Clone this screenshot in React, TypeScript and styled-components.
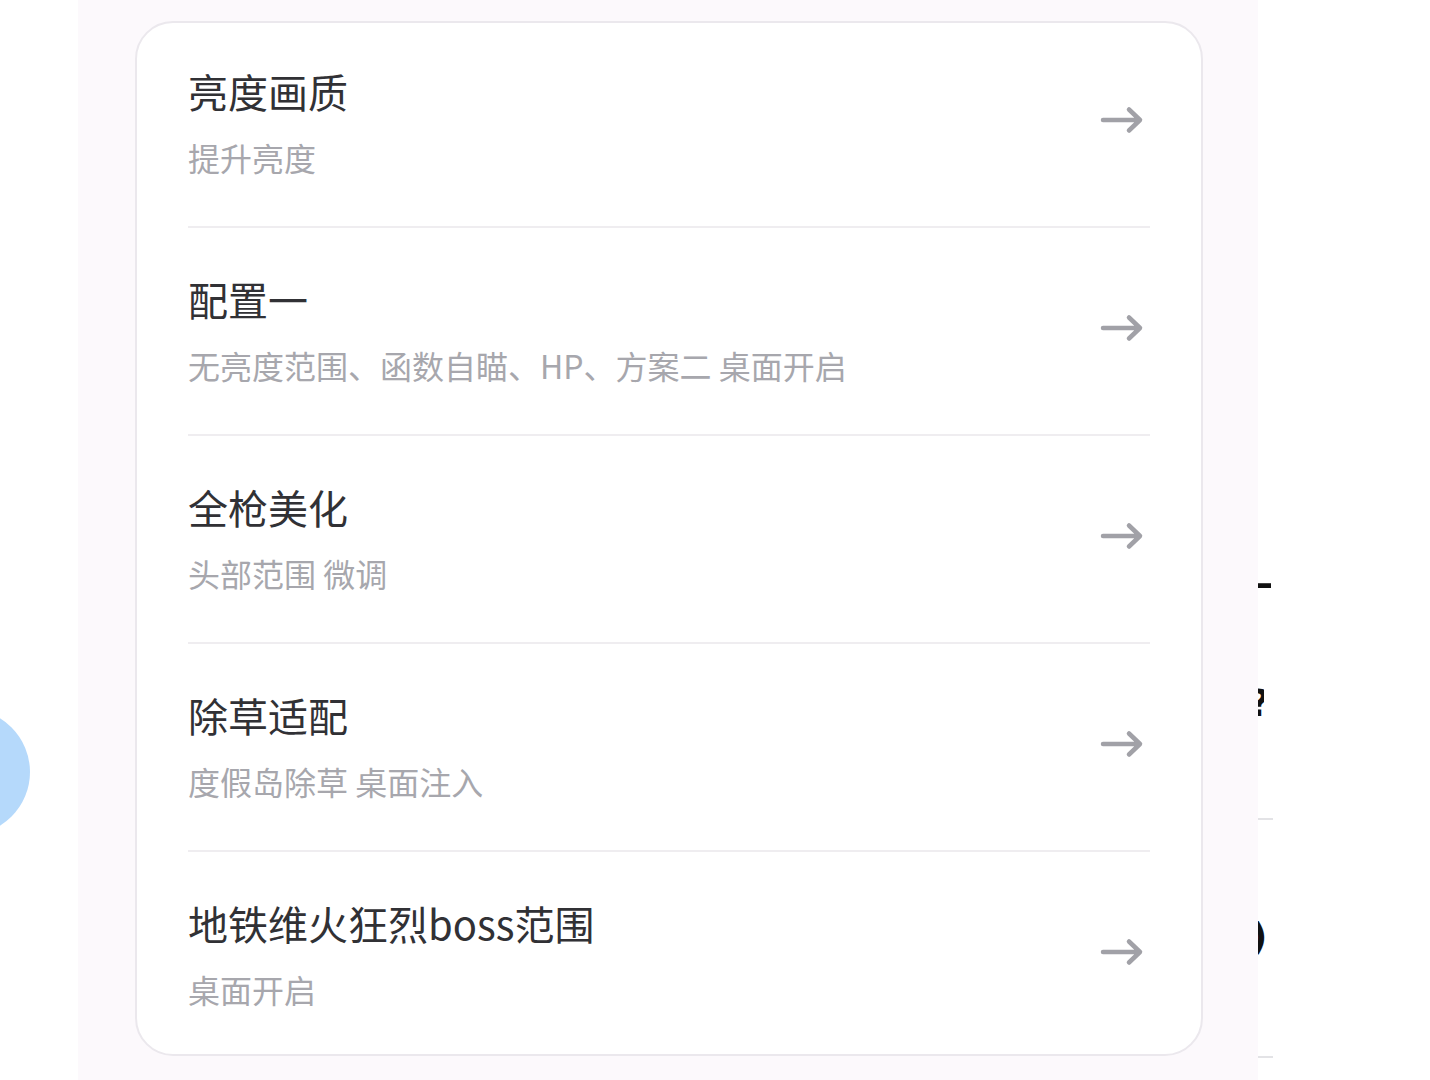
import styled, { createGlobalStyle } from "styled-components";

const GlobalStyle = createGlobalStyle`
  html, body {
    margin: 0;
    padding: 0;
    background: #ffffff;
  }
  body {
    font-family: "Noto Sans CJK SC", "Noto Sans", sans-serif;
  }
`;

const Page = styled.div`
  display: flex;
  width: 1430px;
  height: 1080px;
  overflow: hidden;
  position: relative;
`;

const Gutter = styled.div`
  width: 78px;
  flex-shrink: 0;
  background: #ffffff;
`;

// floating assistant ball peeking in from the left edge
const FloatBall = styled.div`
  position: absolute;
  left: -96px;
  top: 709px;
  width: 126px;
  height: 126px;
  border-radius: 50%;
  background: #b5d9fb;
`;

const Panel = styled.div`
  width: 1180px;
  flex-shrink: 0;
  background: #fcf9fc;
  padding: 21px 0 0 57px;
  box-sizing: border-box;
`;

const Card = styled.div`
  width: 1068px;
  box-sizing: border-box;
  background: #ffffff;
  border: 2px solid #ebe8ed;
  border-radius: 38px;
  padding: 0 51px;
  display: flex;
  flex-direction: column;
`;

const Row = styled.div`
  display: flex;
  align-items: center;
  justify-content: space-between;
  padding: 46px 6px 49px 0;
  border-bottom: 2px solid #efedf0;
  &:first-child {
    padding-top: 43px;
  }
  &:last-child {
    border-bottom: none;
    padding-bottom: 45px;
  }
`;

const Texts = styled.div`
  display: flex;
  flex-direction: column;
  gap: 21px;
`;

const Title = styled.div`
  font-size: 40px;
  line-height: 50px;
  color: #313135;
  white-space: nowrap;
`;

const Subtitle = styled.div`
  font-size: 32px;
  line-height: 40px;
  color: #a7a7ad;
  white-space: nowrap;
`;

const Arrow = styled.svg`
  width: 44px;
  height: 28px;
  flex-shrink: 0;
  margin-bottom: 4px;
`;

const Side = styled.div`
  flex: 1;
  background: #ffffff;
  display: flex;
  flex-direction: column;
  overflow: hidden;
`;

const Clip = styled.div<{ $top: number; $shift: number }>`
  margin-top: ${(p) => p.$top}px;
  margin-left: ${(p) => p.$shift}px;
  width: 16px;
  height: 40px;
  overflow: hidden;
  font-family: "DejaVu Sans", sans-serif;
  font-weight: 700;
  font-size: 38px;
  line-height: 40px;
  color: #111;
  flex-shrink: 0;
`;

const Dash = styled.div<{ $top: number }>`
  margin-top: ${(p) => p.$top}px;
  width: 15px;
  height: 2px;
  background: #e3e3e6;
  flex-shrink: 0;
`;

const items = [
  { title: "亮度画质", sub: "提升亮度" },
  { title: "配置一", sub: "无亮度范围、函数自瞄、HP、方案二 桌面开启" },
  { title: "全枪美化", sub: "头部范围 微调" },
  { title: "除草适配", sub: "度假岛除草 桌面注入" },
  { title: "地铁维火狂烈boss范围", sub: "桌面开启" },
];

function ArrowIcon() {
  return (
    <Arrow viewBox="0 0 44 28" fill="none">
      <path
        d="M3 14H40M29 3.5L40 14L29 24.5"
        stroke="#a1a1a7"
        strokeWidth="4.5"
        strokeLinecap="round"
        strokeLinejoin="round"
      />
    </Arrow>
  );
}

export default function App() {
  return (
    <>
      <GlobalStyle />
      <Page>
        <Gutter />
        <FloatBall />
        <Panel>
          <Card>
            {items.map((it) => (
              <Row key={it.title}>
                <Texts>
                  <Title>{it.title}</Title>
                  <Subtitle>{it.sub}</Subtitle>
                </Texts>
                <ArrowIcon />
              </Row>
            ))}
          </Card>
        </Panel>
        <Side>
          <Clip $top={563} $shift={-3}>
            –
          </Clip>
          <Clip $top={80} $shift={-10}>
            ?
          </Clip>
          <Dash $top={95} />
          <Clip $top={96} $shift={-8}>
            )
          </Clip>
          <Dash $top={100} />
        </Side>
      </Page>
    </>
  );
}
